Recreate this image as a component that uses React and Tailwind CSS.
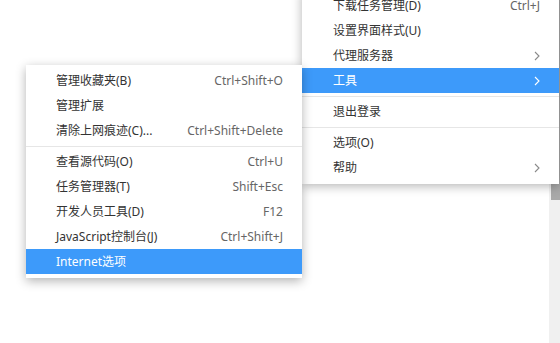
import React from 'react';

const TOP_MENU = [
  { label: '下载任务管理(D)', keys: 'Ctrl+J' },
  { label: '设置界面样式(U)' },
  { label: '代理服务器', sub: true },
  { label: '工具', sub: true, active: true },
  { sep: true },
  { label: '退出登录' },
  { sep: true },
  { label: '选项(O)' },
  { label: '帮助', sub: true },
];

const TOOLS_MENU = [
  { label: '管理收藏夹(B)', keys: 'Ctrl+Shift+O' },
  { label: '管理扩展' },
  { label: '清除上网痕迹(C)...', keys: 'Ctrl+Shift+Delete' },
  { sep: true },
  { label: '查看源代码(O)', keys: 'Ctrl+U' },
  { label: '任务管理器(T)', keys: 'Shift+Esc' },
  { label: '开发人员工具(D)', keys: 'F12' },
  { label: 'JavaScript控制台(J)', keys: 'Ctrl+Shift+J' },
  { label: 'Internet选项', active: true },
];

const Chevron = ({ active }) => (
  <svg width="6" height="10" viewBox="0 0 6 10" fill="none">
    <path d="M1 1l4 4-4 4" stroke={active ? '#fff' : '#8a8a8a'} strokeWidth="1.1" />
  </svg>
);

const MenuRows = ({ items, padLeft }) =>
  items.map((it, i) =>
    it.sep ? (
      <div key={i} className="h-[6px] flex items-center">
        <div className="w-full h-px bg-[#e6e6e6]" />
      </div>
    ) : (
      <div
        key={i}
        className={`h-[25px] flex items-center justify-between pr-[19px] ${padLeft} ${
          it.active ? 'bg-[#3d9afa] text-white' : 'text-[#333]'
        }`}
      >
        <span>{it.label}</span>
        {it.keys && <span className="text-[#666]">{it.keys}</span>}
        {it.sub && <Chevron active={it.active} />}
      </div>
    )
  );

export default function App() {
  return (
    <div
      className="relative w-[560px] h-[343px] overflow-hidden bg-white text-[12px] leading-none"
      style={{ fontFamily: '"Noto Sans", "Noto Sans CJK SC", sans-serif' }}
    >
      {/* page scrollbar */}
      <div className="absolute right-0 top-0 bottom-0 w-[11px] bg-[#f0f0f0]">
        <div className="ml-[2px] h-[200px] bg-[#a9a9a9]" />
      </div>

      {/* main menu */}
      <div className="absolute left-[302px] top-[-10px] w-[257px] pt-[3px] pb-[4px] bg-white shadow-[0_2px_10px_rgba(0,0,0,0.3)]">
        <MenuRows items={TOP_MENU} padLeft="pl-[31px]" />
      </div>

      {/* tools submenu */}
      <div className="absolute left-[26px] top-[65px] w-[276px] pt-[3px] pb-[4px] bg-white shadow-[0_3px_10px_rgba(0,0,0,0.3)]">
        <MenuRows items={TOOLS_MENU} padLeft="pl-[30px]" />
      </div>
    </div>
  );
}
